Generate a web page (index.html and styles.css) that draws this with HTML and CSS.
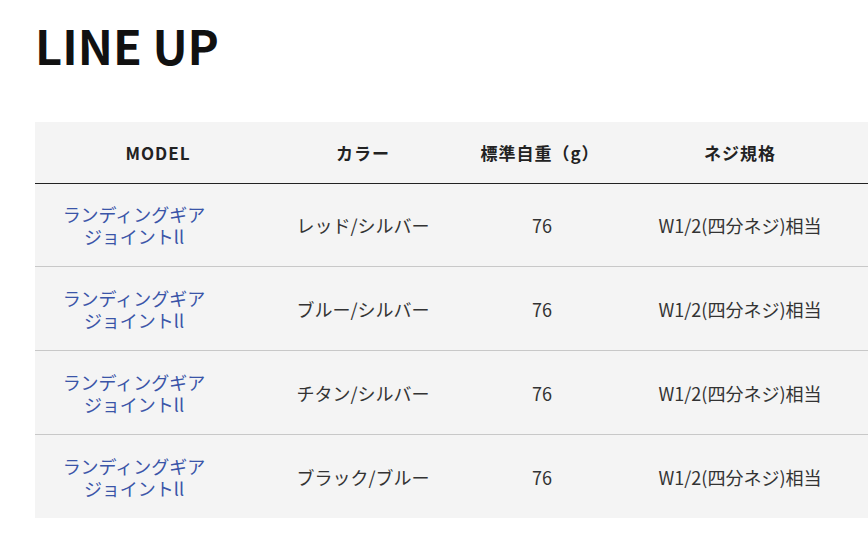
FILE: index.html
```html
<!DOCTYPE html>
<html lang="ja">
<head>
<meta charset="utf-8">
<link rel="stylesheet" href="styles.css">
</head>
<body>
<main class="page">
  <h2 class="title">LINE UP</h2>
  <div class="table">
    <div class="row head">
      <div class="cell c1">MODEL</div>
      <div class="cell c2">カラー</div>
      <div class="cell c3">標準自重（g）</div>
      <div class="cell c4">ネジ規格</div>
    </div>
    <div class="row first">
      <div class="cell c1"><a class="model">ランディングギア<br>ジョイントll</a></div>
      <div class="cell c2">レッド/シルバー</div>
      <div class="cell c3">76</div>
      <div class="cell c4">W1/2(四分ネジ)相当</div>
    </div>
    <div class="row">
      <div class="cell c1"><a class="model">ランディングギア<br>ジョイントll</a></div>
      <div class="cell c2">ブルー/シルバー</div>
      <div class="cell c3">76</div>
      <div class="cell c4">W1/2(四分ネジ)相当</div>
    </div>
    <div class="row">
      <div class="cell c1"><a class="model">ランディングギア<br>ジョイントll</a></div>
      <div class="cell c2">チタン/シルバー</div>
      <div class="cell c3">76</div>
      <div class="cell c4">W1/2(四分ネジ)相当</div>
    </div>
    <div class="row last">
      <div class="cell c1"><a class="model">ランディングギア<br>ジョイントll</a></div>
      <div class="cell c2">ブラック/ブルー</div>
      <div class="cell c3">76</div>
      <div class="cell c4">W1/2(四分ネジ)相当</div>
    </div>
  </div>
</main>
</body>
</html>
```
FILE: styles.css
```css
html, body {
  margin: 0;
  padding: 0;
  background: #fff;
  overflow: hidden;
}
body {
  font-family: "Noto Sans CJK JP", "Noto Sans", sans-serif;
  color: #333;
}
.page {
  padding: 0 0 0 35px;
  width: 833px;
}
.title {
  margin: 0;
  padding: 12px 0 0 0;
  font-size: 47px;
  line-height: 66px;
  font-weight: 700;
  color: #111;
  height: 110px;
  box-sizing: border-box;
}
.table {
  margin-top: 12px;
  background: #f4f4f4;
}
.row {
  display: grid;
  grid-template-columns: 178px 235px 180px 240px;
  height: 83px;
  border-bottom: 1px solid #c8c8c8;
  align-items: center;
  font-size: 18px;
  line-height: 22px;
}
.row.first { height: 82px; }
.row.last { border-bottom: none; }
.row.head {
  height: 61px;
  border-bottom: 1px solid #222;
  font-weight: 700;
  font-size: 17px;
  letter-spacing: 1px;
  color: #222;
}
.cell {
  text-align: center;
}
.c1 { padding-left: 20px; }
.head .c1 { padding-left: 68px; }
.c2 { padding-left: 65px; }
.c3 { padding-left: 8px; }
.head .c3 { padding-left: 4px; }
.c4 { padding-right: 16px; }
.model {
  color: #3a55a8;
  text-decoration: none;
}
```
